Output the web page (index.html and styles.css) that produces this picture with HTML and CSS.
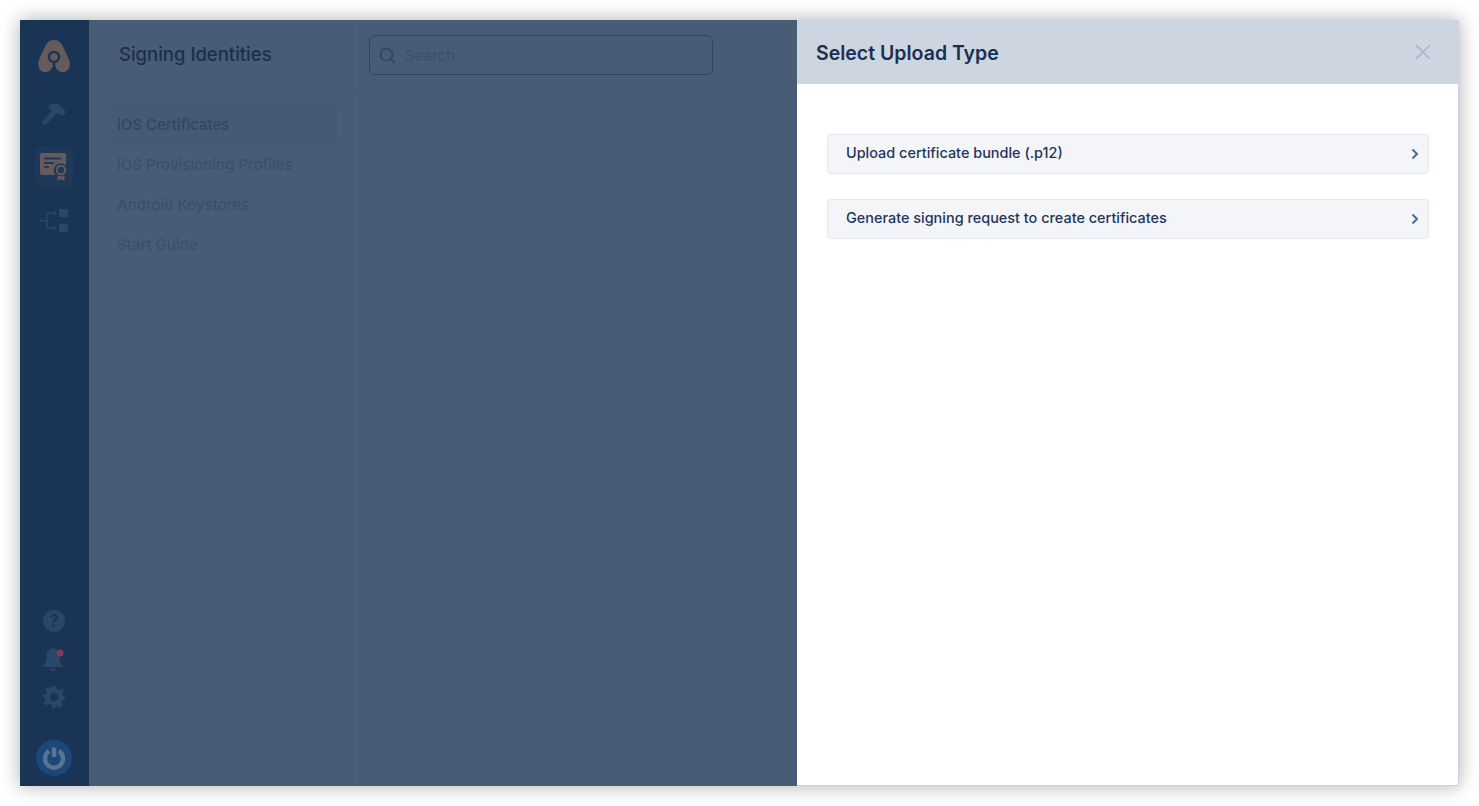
FILE: index.html
```html
<!DOCTYPE html>
<html lang="en">
<head>
    <meta charset="UTF-8">
    <meta name="viewport" content="width=device-width, initial-scale=1.0">
    <title>Signing Identities</title>
    <link rel="stylesheet" href="styles.css">
</head>
<body>

    <div class="window">
        <nav class="rail">
            <svg class="logo" width="32" height="32" viewBox="0 0 32 32">
                <path fill="#655a5c" d="M16 0C20 0 22.800 2 24.500 5.500L31 19.500C33 24 31.500 32 25 32C21 32 19 30 17.500 27H14.500C13 30 11 32 7 32C.5 32-1 24 1 19.500L7.500 5.500C9.200 2 12 0 16 0Z"/>
                <circle cx="16" cy="17" r="5" fill="none" stroke="#1a3456" stroke-width="2.400"/>
                <path d="M16 21v8" stroke="#1a3456" stroke-width="2.600"/>
                <circle cx="16" cy="17" r="3.200" fill="#655a5c"/>
            </svg>
            <svg class="rail-icon hammer" width="26" height="26" viewBox="0 0 26 26">
                <path d="M3.500 21.500L13 11.500" stroke="#2a4669" stroke-width="5" stroke-linecap="round"/>
                <path fill="#2a4669" d="M7 5.500C10 2.500 14 1.500 17 3L20 6L23 8.500L25 11.500L21 15L18 12L14.500 13.500L9.500 8.500Z"/>
            </svg>
            <div class="rail-active">
                <svg width="28" height="28" viewBox="0 0 28 28">
                    <path fill="#655a5c" d="M2 0h22a2 2 0 0 1 2 2v10.500a7 7 0 0 0-10.500 9.500H2a2 2 0 0 1-2-2V2a2 2 0 0 1 2-2z"/>
                    <path fill="#1f3959" d="M4 4.500h17v2H4zM4 9h10v2H4zM4 13h5v1.800H4z"/>
                    <circle cx="21" cy="17" r="4.200" fill="none" stroke="#655a5c" stroke-width="2"/>
                    <path fill="#655a5c" d="M17.500 22.500c2 1 5 1 7 0V28L21 26l-3.500 2z"/>
                </svg>
            </div>
            <svg class="rail-icon tree" width="30" height="24" viewBox="0 0 30 24">
                <g fill="#2a4669">
                    <rect x="20" y="0" width="9" height="8"/>
                    <rect x="20" y="15" width="9" height="8"/>
                    <path d="M0 11h7V6a2.500 2.500 0 0 1 2.500-2.500H15V2l3 2.500L15 7V5H10a1.500 1.500 0 0 0-1.500 1.500V17a1.500 1.500 0 0 0 1.500 1.500h5V16.500l3 2.500-3 2.500V20H9.500A2.500 2.500 0 0 1 7 17.500v-5H0z"/>
                </g>
            </svg>

            <div class="rail-bottom">
                <div class="help">?</div>
                <svg class="bell" width="24" height="26" viewBox="0 0 24 26">
                    <path fill="#2a4669" d="M11 1c1 0 1.500.5 1.800 1.300C16 3 17.500 6 17.500 9.500c0 5 1.500 7.500 3.500 9.500v1H1v-1c2-2 3.500-4.500 3.500-9.500C4.500 6 6 3 9.200 2.300 9.500 1.500 10 1 11 1zM8.500 21.500h5a2.500 2.500 0 0 1-5 0z"/>
                    <circle cx="18" cy="6" r="3.500" fill="#7a4052"/>
                </svg>
                <svg class="gear" width="22" height="22" viewBox="0 0 22 22">
                    <path fill="#2a4669" fill-rule="evenodd" d="M9 0h4l.6 3 2.300 1 2.600-1.700 2.800 2.800L19 7.700l1 2.300 2 .4v3.200l-3 .6-1 2.300 1.700 2.600-2.800 2.800-2.600-1.700-2.300 1L13 22H9l-.6-3-2.300-1-2.600 1.700-2.800-2.800L2.400 14.300l-1-2.300L0 11.600V8.800l3-.6 1-2.200-1.700-2.600L5.100.7 7.700 2.400 8.600 2z"/>
                    <circle cx="11" cy="11" r="4" fill="#1a3456"/>
                </svg>
                <div class="power">
                    <svg width="22" height="24" viewBox="0 0 22 24">
                        <path fill="none" stroke="#587493" stroke-width="4.500" d="M6 5.200a9 9 0 1 0 10 0M11 1.500V11"/>
                    </svg>
                </div>
            </div>
        </nav>

        <aside class="subnav">
            <h2 class="subnav-title">Signing Identities</h2>
            <ul class="subnav-list">
                <li class="subnav-item active">iOS Certificates</li>
                <li class="subnav-item">iOS Provisioning Profiles</li>
                <li class="subnav-item">Android Keystores</li>
                <li class="subnav-item">Start Guide</li>
            </ul>
        </aside>

        <main class="content">
            <div class="toolbar">
                <div class="search">
                    <svg width="17" height="17" viewBox="0 0 17 17">
                        <circle cx="7.500" cy="7.500" r="6" fill="none" stroke="#2a4669" stroke-width="1.700"/>
                        <path d="M12 12l4 4" stroke="#2a4669" stroke-width="1.700"/>
                    </svg>
                    <span class="search-text">Search</span>
                </div>
            </div>
        </main>

        <section class="panel">
            <header class="panel-header">
                <h1 class="panel-title">Select Upload Type</h1>
                <svg class="panel-close" width="16" height="16" viewBox="0 0 16 16">
                    <path d="M1 1l14 14M15 1L1 15" stroke="#a8b6c9" stroke-width="1.600"/>
                </svg>
            </header>
            <div class="panel-body">
                <div class="option">
                    <span>Upload certificate bundle (.p12)</span>
                    <svg width="8" height="12" viewBox="0 0 8 12"><path d="M1.500 1.500L6 6l-4.500 4.500" fill="none" stroke="#4d6a94" stroke-width="2"/></svg>
                </div>
                <div class="option">
                    <span>Generate signing request to create certificates</span>
                    <svg width="8" height="12" viewBox="0 0 8 12"><path d="M1.500 1.500L6 6l-4.500 4.500" fill="none" stroke="#4d6a94" stroke-width="2"/></svg>
                </div>
            </div>
        </section>
    </div>

</body>
</html>
```

FILE: styles.css
```css
* {
    box-sizing: border-box;
}
html, body {
    height: 100%;
}
body {
    margin: 0;
    padding: 20px;
    background-color: #fff;
    font-family: Inter, "Liberation Sans", sans-serif;
    overflow: hidden;
}
.window {
    display: flex;
    height: 766px;
    background-color: #495c76;
    box-shadow: 0 0 18px rgba(0, 0, 0, 0.32);
}

/* left rail */
.rail {
    display: flex;
    flex-direction: column;
    align-items: center;
    width: 69px;
    padding: 20px 1px 0 0;
    background-color: #1a3456;
}
.rail .hammer {
    margin-top: 29px;
}
.rail-active {
    display: flex;
    align-items: center;
    justify-content: center;
    width: 38px;
    height: 40px;
    margin-top: 20px;
    border-radius: 8px;
    background-color: #1f3959;
}
.rail .tree {
    margin-top: 22px;
}
.rail-bottom {
    display: flex;
    flex-direction: column;
    align-items: center;
    margin-top: auto;
}
.help {
    width: 22px;
    height: 22px;
    border-radius: 50%;
    background-color: #2a4669;
    color: #1a3456;
    font-size: 17px;
    font-weight: 700;
    line-height: 22px;
    text-align: center;
}
.bell {
    margin-top: 15px;
}
.gear {
    margin-top: 13px;
}
.power {
    display: flex;
    align-items: center;
    justify-content: center;
    width: 36px;
    height: 36px;
    margin-top: 32px;
    margin-bottom: 10px;
    border-radius: 50%;
    background-color: #1b4878;
}

/* second column */
.subnav {
    width: 264px;
    padding: 0 15px 0 16px;
    border-right: 1px solid #475a74;
}
.subnav-title {
    margin: 23px 0 0 14px;
    color: #1b2f4e;
    font-size: 18.500px;
    font-weight: 500;
    line-height: 22px;
}
.subnav-list {
    margin: 39px 0 0;
    padding: 0;
    list-style: none;
}
.subnav-item {
    height: 40px;
    padding: 1px 0 0 12px;
    border-radius: 6px;
    color: #3a4f6f;
    font-size: 15px;
    font-weight: 500;
    line-height: 40px;
}
.subnav-item.active {
    background-color: #465a74;
    color: #2f4668;
}

/* main area behind the panel */
.content {
    width: 444px;
}
.toolbar {
    height: 70px;
    padding: 15px 0 0 16px;
    border-bottom: 1px solid #475a74;
}
.search {
    display: flex;
    align-items: center;
    gap: 9px;
    width: 344px;
    height: 40px;
    padding-left: 9px;
    border: 1px solid #2a4669;
    border-radius: 6px;
}
.search-text {
    color: #3a4f6f;
    font-size: 15px;
}

/* upload panel */
.panel {
    display: flex;
    flex-direction: column;
    width: 662px;
    border-right: 1px solid #cdd3e2;
    border-bottom: 1px solid #cdd3e2;
    background-color: #fff;
}
.panel-header {
    display: flex;
    align-items: center;
    justify-content: space-between;
    height: 64px;
    padding: 0 27px 0 19px;
    background-color: #cdd5e0;
}
.panel-title {
    margin: 2px 0 0;
    color: #1a3050;
    font-size: 19.500px;
    font-weight: 600;
}
.panel-close {
    margin-top: 0;
}
.panel-body {
    display: flex;
    flex-direction: column;
    gap: 25px;
    padding: 50px 29px 0 30px;
}
.option {
    display: flex;
    align-items: center;
    justify-content: space-between;
    height: 40px;
    padding: 0 9px 0 18px;
    border: 1px solid #e4e7ee;
    border-radius: 4px;
    background-color: #f3f5f9;
    color: #1f3659;
    font-size: 14.450px;
    font-weight: 500;
}
.option span {
    margin-top: -4px;
}
```
